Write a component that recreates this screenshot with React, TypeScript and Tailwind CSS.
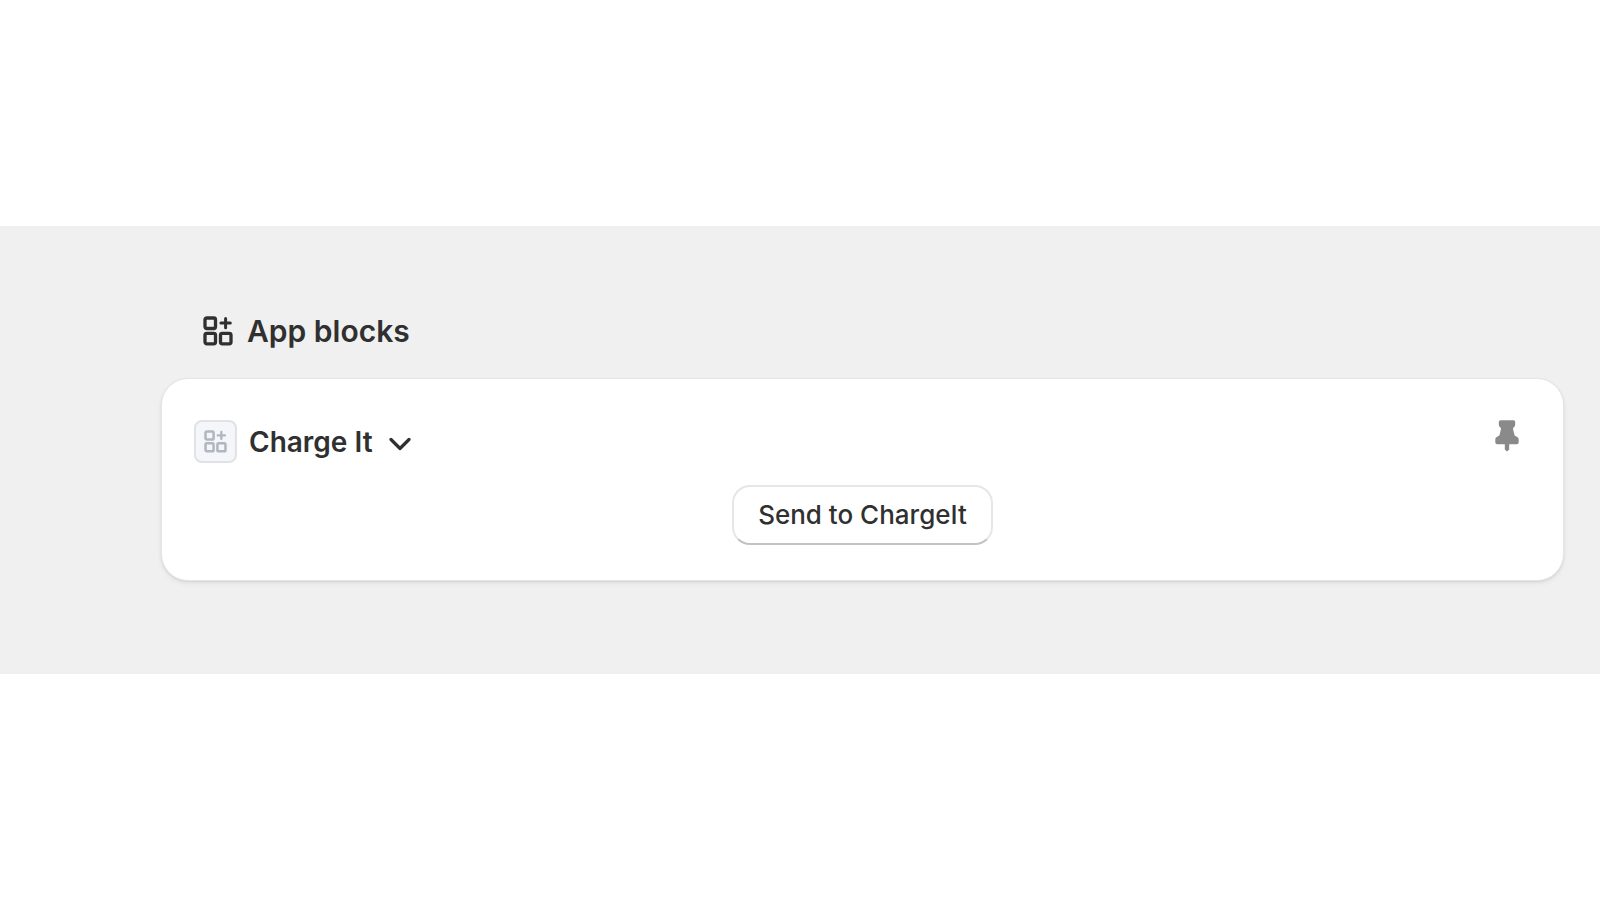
import React from "react";

function BlocksIcon({ className }: { className: string }) {
  return (
    <svg viewBox="0 0 30 30" fill="none" stroke="currentColor" strokeWidth="3.3" className={className} aria-hidden="true">
      <rect x="2" y="2" width="10.5" height="10.5" rx="1.8" />
      <rect x="2" y="17.3" width="10.5" height="10.5" rx="1.8" />
      <rect x="17.5" y="17.3" width="10.5" height="10.5" rx="1.8" />
      <path d="M22.6 2.4v9.4M17.9 7.1h9.4" strokeLinecap="round" strokeWidth="3" />
    </svg>
  );
}

function ChevronIcon() {
  return (
    <svg viewBox="0 0 22 14" fill="none" stroke="currentColor" strokeWidth="3.2" strokeLinecap="round" strokeLinejoin="round" className="h-[14px] w-[22px]" aria-hidden="true">
      <path d="M2 2.5l9 9 9-9" />
    </svg>
  );
}

function PinIcon() {
  return (
    <svg viewBox="0 0 24 32" fill="currentColor" className="h-8 w-6" aria-hidden="true">
      <path d="M5.6 0.3h12.8a1.8 1.8 0 0 1 1.8 1.8v2.6a3 3 0 0 1-.8 2L18 8.2l.3 2 1.3 5.4 2.7 1.5a2.6 2.6 0 0 1 1.4 2.3v2.9a2 2 0 0 1-2 2H14.2v5.2L12 31.6l-2.2-2.1v-5.2H2.3a2 2 0 0 1-2-2v-2.9a2.6 2.6 0 0 1 1.4-2.3l2.7-1.5 1.3-5.4.3-2-1.4-1.5a3 3 0 0 1-.8-2V2.1A1.8 1.8 0 0 1 5.6.3z" />
    </svg>
  );
}

export default function App() {
  return (
    <main className="flex min-h-screen flex-col justify-center bg-white font-['Inter',sans-serif] text-[#303030]">
      <section className="bg-[#f0f0f0] pt-[85px] pr-[37px] pb-[94px] pl-[162px]">
        <header className="flex items-center gap-[14px] pl-[41px]">
          <BlocksIcon className="size-[30px]" />
          <h2 className="text-[30px] leading-10 font-semibold">App blocks</h2>
        </header>
        <div className="mt-7 rounded-[26px] bg-white px-8 pt-[41px] pb-[35px] shadow-[0_0_0_1px_#e6e6e6,0_1px_2px_1px_#d4d4d4,0_3px_6px_#00000010]">
          <div className="flex items-start justify-between">
            <button type="button" className="flex items-center">
              <span className="flex size-[43px] items-center justify-center rounded-lg border-2 border-[#dfe2e6] bg-[#f4f6f9] text-[#b0b7c1]">
                <BlocksIcon className="size-[23px]" />
              </span>
              <span className="ml-3 text-[28px] leading-10 font-semibold">Charge It</span>
              <span className="ml-4 pt-1">
                <ChevronIcon />
              </span>
            </button>
            <button type="button" aria-label="Unpin block" className="mr-3 text-[#8a8a8a]">
              <PinIcon />
            </button>
          </div>
          <div className="mt-[22px] flex justify-center">
            <button type="button" className="rounded-[18px] border-2 border-[#e6e6e6] border-b-[#c2c2c2] bg-white px-6 py-2 text-[26px] leading-10 font-medium">
              Send to ChargeIt
            </button>
          </div>
        </div>
      </section>
    </main>
  );
}
